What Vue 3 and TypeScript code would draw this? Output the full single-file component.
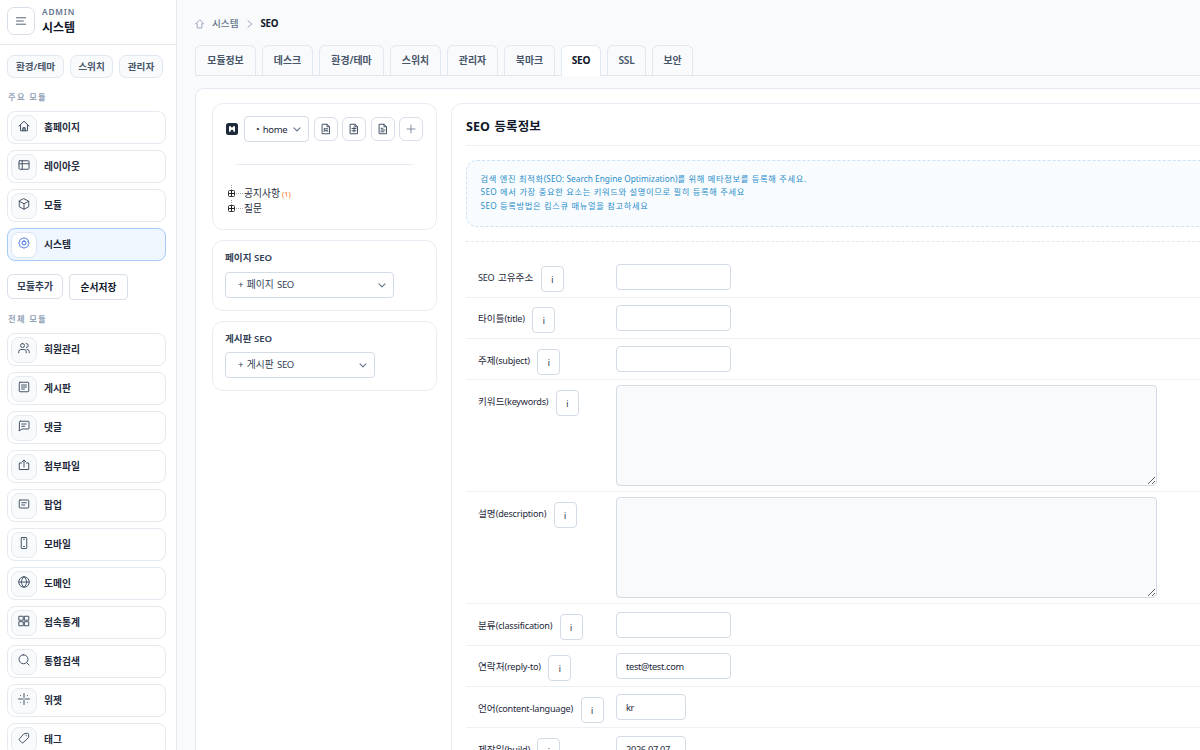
<script setup lang="ts">
interface NavItem { label: string; icon: string; active?: boolean }
interface Field { label: string; kind: 'input' | 'area'; value?: string; size?: string; row: string }
interface Segment { text: string; script: 'ko' | 'la' }

const icons: Record<string, string> = {
  home: 'M2 12 12 2.500 22 12M5 10v11.500h14V10M9.500 21.500v-6h5v6M12 15.500v6',
  layout: 'M3.500 3.500h17a1.500 1.500 0 0 1 1.500 1.500v14a1.500 1.500 0 0 1-1.500 1.500h-17A1.500 1.500 0 0 1 2 19V5a1.500 1.500 0 0 1 1.500-1.500zM8.500 3.500v17M2 9.500h20',
  cube: 'M12 1.500l9.500 5v11L12 22.500l-9.500-5v-11zM2.500 6.500l9.500 5 9.500-5M12 11.500v11',
  gear: 'M12 8a4 4 0 1 0 0 8 4 4 0 0 0 0-8zM20.300 8.600a4 4 0 0 1 0 6.800 4 4 0 0 1-4.900 4.900 4 4 0 0 1-6.800 0 4 4 0 0 1-4.900-4.900 4 4 0 0 1 0-6.800 4 4 0 0 1 4.900-4.900 4 4 0 0 1 6.800 0 4 4 0 0 1 4.900 4.900z',
  users: 'M9 3a4 4 0 1 0 0 8 4 4 0 0 0 0-8zM16.500 3a4 4 0 0 1 0 8M1.500 21.500v-2a4.500 4.500 0 0 1 4.500-4.500h6a4.500 4.500 0 0 1 4.500 4.500v2M18 14.500a5 5 0 0 1 4.500 5v2',
  board: 'M4 2.500h16a1.500 1.500 0 0 1 1.500 1.500v16a1.500 1.500 0 0 1-1.500 1.500H4A1.500 1.500 0 0 1 2.500 20V4A1.500 1.500 0 0 1 4 2.500zM7 8h10M7 12h10M7 16h6',
  comment: 'M4.500 2.500h16A1.500 1.500 0 0 1 22 4v12.500a1.500 1.500 0 0 1-1.500 1.500H8l-6 4 .8-4V4.500a2 2 0 0 1 1.700-2zM7.500 8h9M7.500 12.500h6',
  upload: 'M7 8H2.500v13h19V8H17M12 16V2.500M8 6l4-4 4 4',
  popup: 'M4 4h16a1.500 1.500 0 0 1 1.500 1.500v13A1.500 1.500 0 0 1 20 20H4a1.500 1.500 0 0 1-1.500-1.500v-13A1.500 1.500 0 0 1 4 4zM7.500 9.500h9M7.500 14h6',
  mobile: 'M7.500 1h9a1 1 0 0 1 1 1v20a1 1 0 0 1-1 1h-9a1 1 0 0 1-1-1V2a1 1 0 0 1 1-1zM11 19h2M11 4.500h2',
  globe: 'M12 1.500a10.500 10.500 0 1 0 0 21 10.500 10.500 0 0 0 0-21zM1.500 12h21M12 1.500c-7 6-7 15 0 21M12 1.500c7 6 7 15 0 21',
  grid: 'M2.500 2.500h8v8h-8zM13.500 2.500h8v8h-8zM2.500 13.500h8v8h-8zM13.500 13.500h8v8h-8z',
  search: 'M11 1.500a9 9 0 1 0 0 18 9 9 0 0 0 0-18zM17.500 17.500l4.500 4.500',
  widget: 'M12 1v8M12 15v8M1 12h8M15 12h8M5 5l.5.500M19 5l-.5.500M5 19l.5-.5M19 19l-.5-.5M12 11.500v1',
  tag: 'M12.500 3.500 19 2.500a2 2 0 0 1 2 2l.5 6L10 21.500a1.500 1.500 0 0 1-2 0L2.500 16a1.500 1.500 0 0 1 0-2zM16.500 7v.500',
}

const quick = [
  { label: '환경/테마', w: 'q57' },
  { label: '스위치', w: 'q43' },
  { label: '관리자', w: 'q44' },
]
const mainModules: NavItem[] = [
  { label: '홈페이지', icon: 'home' },
  { label: '레이아웃', icon: 'layout' },
  { label: '모듈', icon: 'cube' },
  { label: '시스템', icon: 'gear', active: true },
]
const allModules: NavItem[] = [
  { label: '회원관리', icon: 'users' },
  { label: '게시판', icon: 'board' },
  { label: '댓글', icon: 'comment' },
  { label: '첨부파일', icon: 'upload' },
  { label: '팝업', icon: 'popup' },
  { label: '모바일', icon: 'mobile' },
  { label: '도메인', icon: 'globe' },
  { label: '접속통계', icon: 'grid' },
  { label: '통합검색', icon: 'search' },
  { label: '위젯', icon: 'widget' },
  { label: '태그', icon: 'tag' },
]
const tabs = [
  { label: '모듈정보', w: 'w61' },
  { label: '데스크', w: 'w51' },
  { label: '환경/테마', w: 'w65' },
  { label: '스위치', w: 'w51' },
  { label: '관리자', w: 'w51' },
  { label: '북마크', w: 'w51' },
  { label: 'SEO', w: 'w40' },
  { label: 'SSL', w: 'w39' },
  { label: '보안', w: 'w41' },
]
const fileIcons = [
  'M8.500 12v5l2-2.500 1.500 2 1.500-3 2 3.500M8.500 11.500h7',
  'M8 11h8M8 15.500h8M12 8v10',
  'M8 10.500h4M8 14h8M8 17.500h6',
]
const notice = [
  '검색 엔진 최적화(SEO: Search Engine Optimization)를 위해 메타정보를 등록해 주세요.',
  'SEO 에서 가장 중요한 요소는 키워드와 설명이므로 필히 등록해 주세요',
  'SEO 등록방법은 킴스큐 매뉴얼을 참고하세요',
]
const fields: Field[] = [
  { label: 'SEO 고유주소', kind: 'input', row: 'r41' },
  { label: '타이틀(title)', kind: 'input', row: 'r41' },
  { label: '주제(subject)', kind: 'input', row: 'r41 low' },
  { label: '키워드(keywords)', kind: 'area', row: 'r112' },
  { label: '설명(description)', kind: 'area', row: 'r112' },
  { label: '분류(classification)', kind: 'input', row: 'r42' },
  { label: '연락처(reply-to)', kind: 'input', value: 'test@test.com', row: 'r41' },
  { label: '언어(content-language)', kind: 'input', value: 'kr', size: 'short', row: 'r41 low' },
  { label: '제작일(build)', kind: 'input', value: '2026.07.07', size: 'short', row: 'r41 last' },
]

// Hangul and Latin runs carry their own size and tracking.
function segments(text: string): Segment[] {
  const runs = text.match(/[가-힣]+(?: +[가-힣]+)*|[^가-힣]+/g) ?? []
  return runs.map((t) => ({ text: t, script: /[가-힣]/.test(t) ? 'ko' : 'la' }))
}
</script>

<template>
  <div class="app">
    <aside class="side">
      <header class="side-head">
        <button class="menu" aria-label="menu">
          <svg viewBox="0 0 12 10" width="11" height="10"><path d="M.5 1.500h10M.5 5h7.500M.5 8.500h10" /></svg>
        </button>
        <div>
          <div class="eyebrow">ADMIN</div>
          <div class="side-title">시스템</div>
        </div>
      </header>
      <div class="quick">
        <a v-for="q in quick" :key="q.label" class="chip" :class="q.w">{{ q.label }}</a>
      </div>
      <div class="group">주요 모듈</div>
      <nav class="list">
        <a v-for="m in mainModules" :key="m.label" class="item" :class="{ active: m.active }">
          <span class="ico"><svg viewBox="0 0 24 24"><path :d="icons[m.icon]" /></svg></span>{{ m.label }}
        </a>
      </nav>
      <div class="actions">
        <a class="act">모듈추가</a>
        <a class="act tall">순서저장</a>
      </div>
      <div class="group second">전체 모듈</div>
      <nav class="list">
        <a v-for="m in allModules" :key="m.label" class="item">
          <span class="ico"><svg viewBox="0 0 24 24"><path :d="icons[m.icon]" /></svg></span>{{ m.label }}
        </a>
      </nav>
    </aside>

    <main class="main">
      <div class="crumbs">
        <svg class="crumb-home" viewBox="0 0 9 10" width="9" height="10"><path d="M4.500 1 .7 4.800h1.500V9h4.600V4.800h1.500z" /></svg>
        <span>시스템</span>
        <svg class="crumb-sep" viewBox="0 0 6 8" width="6" height="8"><path d="M1 .8 4.800 4 1 7.200" /></svg>
        <b>SEO</b>
      </div>
      <div class="tabs">
        <a v-for="t in tabs" :key="t.label" class="tab" :class="[t.w, { on: t.label === 'SEO' }]">{{ t.label }}</a>
      </div>
      <div class="panel">
        <div class="left">
          <section class="card tree-card">
            <div class="tools">
              <span class="logo"><svg viewBox="0 0 12 12" width="12" height="12"><path d="M3 3.300h1.600L6 4.800l1.400-1.500H9v5.400H7.400V7.500L6 6.500 4.600 7.500v1.200H3z" /></svg></span>
              <div class="select home">
                <span>・<em>home</em></span>
                <svg viewBox="0 0 8 5" width="8" height="5"><path d="M1 .8 4 3.800 7 .8" /></svg>
              </div>
              <button v-for="f in fileIcons" :key="f" class="tool">
                <svg viewBox="0 0 24 24" width="12" height="12"><path d="M5 2.500h9l5 5v14H5zM14 2.500v5h5" /><path :d="f" /></svg>
              </button>
              <button class="tool plus"><svg viewBox="0 0 24 24" width="12" height="12"><path d="M12 4v16M4 12h16" /></svg></button>
            </div>
            <hr class="rule" />
            <ul class="tree">
              <li><i class="node"></i><i class="dots"></i>공지사항<small>(1)</small></li>
              <li><i class="node"></i><i class="dots"></i>질문</li>
            </ul>
          </section>
          <section class="card page-card">
            <h4>페이지 SEO</h4>
            <div class="select wide">
              <span>+ 페이지 <em>SEO</em></span>
              <svg viewBox="0 0 8 5" width="8" height="5"><path d="M1 .8 4 3.800 7 .8" /></svg>
            </div>
          </section>
          <section class="card board-card">
            <h4>게시판 SEO</h4>
            <div class="select mid">
              <span>+ 게시판 <em>SEO</em></span>
              <svg viewBox="0 0 8 5" width="8" height="5"><path d="M1 .8 4 3.800 7 .8" /></svg>
            </div>
          </section>
        </div>
        <section class="form">
          <h3>SEO 등록정보</h3>
          <div class="notice">
            <p v-for="n in notice" :key="n"><span v-for="(s, i) in segments(n)" :key="i" :class="s.script">{{ s.text }}</span></p>
          </div>
          <div class="dash"></div>
          <div v-for="f in fields" :key="f.label" class="row" :class="f.row">
            <div class="lab">
              <div class="name"><span v-for="(s, i) in segments(f.label)" :key="i" :class="s.script">{{ s.text }}</span></div>
              <button class="info">i</button>
            </div>
            <textarea v-if="f.kind === 'area'" class="area"></textarea>
            <input v-else class="inp" :class="f.size" type="text" :value="f.value" />
          </div>
        </section>
      </div>
    </main>
  </div>
</template>

<style>
html, body { margin: 0; overflow: hidden; }
</style>

<style scoped>
* { box-sizing: border-box; }
.app {
  display: flex; width: 1200px; height: 750px; overflow: hidden;
  background: #f8fafc; color: #1e293b;
  font-family: "Noto Sans", "Noto Sans CJK KR", sans-serif; font-size: 9.75px; line-height: 14px;
}
svg { display: block; fill: none; stroke: currentColor; stroke-linecap: round; stroke-linejoin: round; }
button { padding: 0; font-family: inherit; background: #fff; }
em { font-style: normal; }

.side { flex: none; width: 177px; height: 750px; overflow: hidden; background: #fff; border-right: 1px solid #e5eaf1; }
.side-head { display: flex; gap: 7px; height: 45px; padding: 7px 0 0 7px; border-bottom: 1px solid #e5eaf1; }
.menu { display: grid; place-items: center; width: 28px; height: 28px; border: 1px solid #d8dfe9; border-radius: 7px; color: #475569; }
.menu svg { stroke-width: 1; }
.eyebrow { margin-top: -1px; font-size: 8.250px; font-weight: 600; letter-spacing: .85px; line-height: 12px; color: #64748b; }
.side-title { font-size: 12px; font-weight: 700; line-height: 19px; color: #0f172a; }
.quick { display: flex; gap: 6px; padding: 10px 0 0 7px; }
.chip { height: 23px; border: 1px solid #e2e8f0; border-radius: 7px; background: #f8fafc; font-size: 9.600px; font-weight: 600; line-height: 21px; text-align: center; color: #475569; }
.q57 { width: 57px; } .q43 { width: 43px; } .q44 { width: 44px; }
.group { height: 14px; margin: 12px 0 7px 8px; font-size: 8.250px; font-weight: 700; letter-spacing: 1.300px; line-height: 14px; color: #94a3b8; }
.group.second { margin-top: 12px; }
.list { display: flex; flex-direction: column; gap: 6px; padding-left: 7px; }
.item { display: flex; align-items: center; gap: 7px; flex: none; width: 159px; height: 33px; padding-left: 3px; border: 1px solid #e5eaf1; border-radius: 8px; font-weight: 700; color: #1e293b; line-height: 13px; }
.ico { display: flex; justify-content: center; width: 26px; height: 26px; padding-top: 4.500px; border: 1px solid #e5eaf1; border-radius: 8px; background: #f8fafc; color: #475569; }
.ico svg { width: 12px; height: 12px; stroke-width: 2; }
.item.active { border-color: #a5ccf6; background: #eff6ff; }
.active .ico { background: #fff; border-color: #dbe7f7; color: #3b6fe0; }
.actions { display: flex; align-items: flex-start; gap: 6px; height: 26px; margin-top: 13px; padding-left: 7px; }
.act { width: 56px; height: 25px; border: 1px solid #d8dfe9; border-radius: 6px; font-weight: 600; line-height: 23px; text-align: center; color: #334155; }
.act.tall { width: 59px; height: 26px; border-radius: 4px; line-height: 25px; color: #0f172a; }

.main { flex: 1; min-width: 0; padding: 17px 0 0 18px; }
.crumbs { display: flex; align-items: center; height: 14px; font-size: 9.650px; font-weight: 500; color: #64748b; }
.crumb-home { margin-right: 8px; stroke: #94a3b8; stroke-width: .9; }
.crumb-sep { margin: 0 8px 0 8px; stroke: #94a3b8; }
.crumbs b { font-weight: 700; font-size: 9.750px; letter-spacing: -.35px; color: #0f172a; }
.tabs { display: flex; gap: 6px; height: 31px; margin-top: 14px; border-bottom: 1px solid #dfe6ee; }
.tab { height: 30px; border: 1px solid #e2e8f0; border-bottom: 0; border-radius: 6px 6px 0 0; background: #f8fafc; font-size: 9.900px; font-weight: 600; line-height: 29px; text-align: center; color: #475569; }
.tab.on { height: 31px; background: #fff; color: #0f172a; }
.w61 { width: 61px; } .w51 { width: 51px; } .w65 { width: 65px; } .w40 { width: 40px; } .w41 { width: 41px; } .w39 { width: 39px; }
.w40, .w39 { font-size: 10.200px; letter-spacing: -.2px; }
.w40 { font-weight: 700; letter-spacing: -.35px; }

.panel { display: flex; gap: 14px; width: 1040px; height: 700px; margin-top: 12px; padding: 14px 16px; border: 1px solid #e5eaf1; border-radius: 9px; background: #fff; }
.left { flex: none; width: 225px; display: flex; flex-direction: column; gap: 10px; }
.card { border: 1px solid #e8edf3; border-radius: 11px; }
.tree-card { height: 127px; padding: 12px 13px; }
.page-card { height: 71px; padding: 10px 12px; }
.board-card { height: 70px; padding: 10px 12px; }
.tools { display: flex; align-items: center; gap: 5px; height: 26px; }
.logo { width: 12px; height: 12px; margin-right: 1px; border-radius: 2.500px; background: #1e293b; }
.logo path { fill: #fff; stroke: none; }
.select { display: flex; align-items: center; justify-content: space-between; height: 26px; border: 1px solid #d3dbe5; border-radius: 4px; background: #fff; color: #1e293b; line-height: 13px; }
.select svg { stroke: #64748b; stroke-width: 1.100; }
.select.home { width: 65px; padding: 0 7px 0 8px; }
.select.home em { font-size: 9.500px; letter-spacing: -.35px; }
.select.wide { width: 169px; padding: 0 7px 0 12px; }
.select.mid { width: 150px; padding: 0 7px 0 12px; }
.wide span, .mid span { word-spacing: .7px; color: #334155; line-height: 12px; }
.wide em, .mid em { font-size: 9.500px; letter-spacing: -.3px; }
.tool { display: grid; place-items: center; width: 24px; height: 24px; border: 1px solid #d8dfe9; border-radius: 6px; color: #475569; }
.tool + .tool { margin-left: -.5px; }
.tool svg { stroke-width: 2; }
.plus svg { stroke-width: 1.600; color: #64748b; }
.rule { height: 1px; margin: 22px 8px 21px; border: 0; background: linear-gradient(90deg, #f4f7fa, #e2e8f0 4%, #e2e8f0 96%, #f4f7fa); }
.tree { margin: 0; padding: 0 0 0 2px; list-style: none; color: #1e293b; }
.tree li { display: flex; align-items: center; height: 15px; }
.tree small { margin: 1px 0 0 2px; font-size: 7.500px; color: #f97316; }
.node { position: relative; width: 7px; height: 7px; border: 1px solid #333; border-radius: 1.500px; background: linear-gradient(#222, #222) center / 5px 1px no-repeat, linear-gradient(#222, #222) center / 1px 5px no-repeat; }
.node::before { content: ""; position: absolute; left: 2px; bottom: 6px; height: 5px; border-left: 1px dotted #999; }
.dots { width: 7px; margin: 0 1px 0 1px; border-top: 1px dotted #aaa; }
h4 { margin: 0 0 7px; font-size: 9.600px; font-weight: 600; line-height: 14px; color: #334155; }
.board-card h4 { margin-bottom: 6px; }

.form { flex: none; width: 900px; border: 1px solid #e8edf3; border-radius: 11px; padding-left: 14px; }
h3 { height: 42px; margin: 0; border-bottom: 1px solid #edf1f6; font-size: 12.500px; font-weight: 700; letter-spacing: .1px; word-spacing: 1px; line-height: 46px; color: #0f172a; }
.notice { height: 67px; margin-top: 14px; padding: 10.500px 13.500px; border: 1px dashed #cfe2f5; border-radius: 11px; background: #f8fcff; font-size: 8.250px; color: #2b8cc9; }
.notice p { margin: 0; line-height: 13.800px; white-space: pre; }
.notice .ko { letter-spacing: .65px; }
.notice .la { letter-spacing: .05px; }
.notice p:nth-child(n + 2) .la { letter-spacing: .35px; word-spacing: .5px; }
.dash { height: 1px; margin: 14px 0 15px; border-top: 1px dashed #e2e8f0; }
.row { display: flex; align-items: flex-start; padding: 7px 0 0 12px; border-bottom: 1px solid #edf1f5; }
.r41 { height: 41px; } .r42 { height: 42px; } .r112 { height: 112px; padding-top: 5px; }
.lab { display: flex; align-items: flex-start; flex: none; width: 138px; white-space: pre; color: #1e293b; }
.name { margin: 7px 7.500px 0 0; height: 14px; line-height: 14px; }
.name .ko { font-size: 9.600px; }
.name .la { font-size: 9.100px; letter-spacing: -.22px; word-spacing: 1.300px; }
.info { width: 23px; height: 26px; margin-top: 2px; border: 1px solid #d3dbe5; border-radius: 4px; font-size: 8px; font-weight: 500; color: #334155; }
.r112 .lab { padding-top: 3px; }
.low .lab { padding-top: 1px; }
.inp { width: 115px; height: 26px; padding: 0 9px; border: 1px solid #d3dbe5; border-radius: 4px; background: #fff; font: inherit; color: #1e293b; font-size: 9.250px; letter-spacing: -.34px; }
.inp.short { width: 70px; }
.r42 .lab, .r42 .inp { margin-top: 1px; }
.last { padding-top: 8px; }
.area { width: 541px; height: 101px; margin: 0; padding: 0; border: 1px solid #d3dbe5; border-radius: 4px; background: #f8fafc; resize: both; }
</style>
